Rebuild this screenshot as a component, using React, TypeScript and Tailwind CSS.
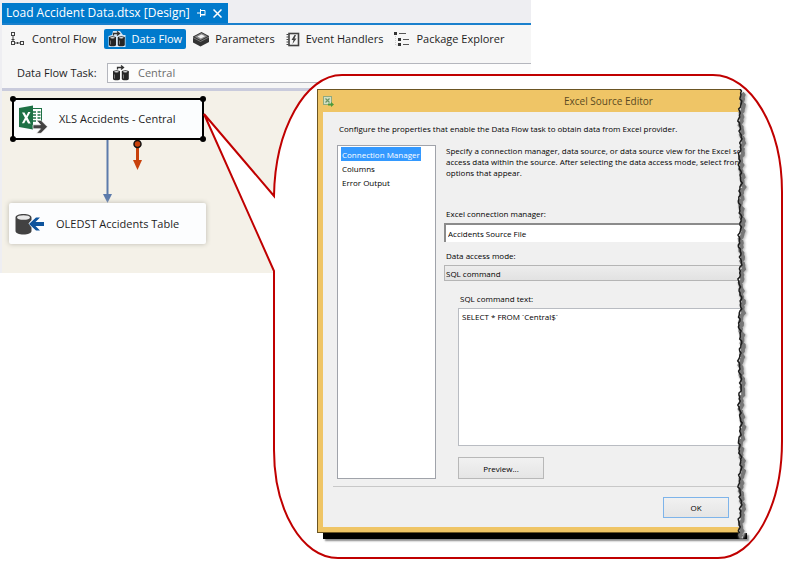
// SSIS designer with a callout that shows the Excel Source Editor dialog
import React, { useState } from "react";

const TABS = ["Control Flow", "Data Flow", "Parameters", "Event Handlers", "Package Explorer"] as const;
const PAGES = ["Connection Manager", "Columns", "Error Output"];

const ControlFlowIcon = () => (
  <svg width="16" height="16" viewBox="0 0 16 16" fill="none" stroke="#424242">
    <rect x="1.500" y="1.500" width="3" height="3" />
    <rect x="1.500" y="10.500" width="3" height="3" />
    <rect x="10.500" y="10.500" width="3" height="3" />
    <path d="M3 5v5M1.500 8.500h3M5 12h5M7.500 11v2" />
  </svg>
);

const DataFlowIcon = ({ light = false }: { light?: boolean }) => (
  <svg width="18" height="16" viewBox="0 0 18 16">
    {light && <path d="M5 0h7l3 4h2.500v12H.5V5L4 4z" fill="#d9e8f5" />}
    <path d="M5.500 4.500V2.500H11M9 .5l2.500 2L9 4.500" fill="none" stroke="#333" strokeWidth="1.300" />
    <path d="M1 6.500h7V14c0 .8-1.500 1.300-3.500 1.300S1 14.800 1 14zM9.800 6.500h7V14c0 .8-1.500 1.300-3.500 1.300s-3.500-.5-3.500-1.300z" fill="#262626" />
    <ellipse cx="4.500" cy="6.800" rx="3.500" ry="1.500" fill="#262626" />
    <ellipse cx="13.300" cy="6.800" rx="3.500" ry="1.500" fill="#262626" />
    <ellipse cx="4.500" cy="6.800" rx="2.300" ry=".8" fill="#ddd" />
    <ellipse cx="13.300" cy="6.800" rx="2.300" ry=".8" fill="#ddd" />
    <path d="M2.500 9.500v4M11.500 9.500v4" stroke="#777" />
  </svg>
);

const ParametersIcon = () => (
  <svg width="16" height="16" viewBox="0 0 16 16">
    <path d="M0 5.500L8.500 1 16 5v6l-8.500 4.500L0 11.500z" fill="#333" />
    <path d="M1.500 5.800L8.500 2 14.500 5.200 7.500 9z" fill="#8a8a8a" />
    <path d="M4.500 5.500L8.500 3.500l3.500 1.800L7.800 7.500z" fill="#eee" />
    <path d="M0 6.500l7.500 4L16 6" fill="none" stroke="#aaa" strokeWidth=".6" />
  </svg>
);

const EventHandlersIcon = () => (
  <svg width="14" height="15" viewBox="0 0 14 15">
    <rect x="3" y="1.500" width="9.500" height="12" fill="#f6f6f6" stroke="#424242" strokeWidth="1.600" />
    <path d="M.5 2.500h2M.5 5h2M.5 7.500h2M.5 10h2M.5 12.500h2" stroke="#424242" />
    <path d="M8.500 3L5.500 8h2L6.500 12 10.500 6.500h-2L10 3z" fill="#424242" />
  </svg>
);

const PackageExplorerIcon = () => (
  <svg width="16" height="16" viewBox="0 0 16 16">
    <path d="M0 1h3v3H0zM4 7h3v3H4zM4 12h3v3H4z" fill="#333" />
    <path d="M5 2.500h7M9 8.500h6M9 13.500h6" stroke="#555" />
    <path d="M1.500 5v9H4" fill="none" stroke="#ccc" strokeDasharray="1 1" />
  </svg>
);

const TAB_ICONS = [ControlFlowIcon, () => <DataFlowIcon light />, ParametersIcon, EventHandlersIcon, PackageExplorerIcon];

const ExcelSourceIcon = () => (
  <svg width="30" height="30" viewBox="0 0 30 30" className="shrink-0">
    <rect x="12.500" y="4.500" width="11" height="17" fill="#fff" stroke="#1e7145" />
    <path d="M15 8h3M19.500 8h3M15 11h3M19.500 11h3M15 14h3M19.500 14h3M15 17h3M19.500 17h3" stroke="#1e7145" strokeWidth="1.500" />
    <path d="M1 4l14-2.500v24L1 23z" fill="#1e7145" />
    <path d="M4 8.500h2.500l1.800 3.300L10.200 8h2.300l-3 5.500 3.200 6h-2.600l-2-3.700-1.900 3.400H3.900l3-5.400z" fill="#fff" />
    <path d="M15 20.800h7.500l-4-4.500h4.500l6.500 6.500-6.500 6.500h-4.500l4-4.500H15z" fill="#424242" stroke="#fff" strokeWidth=".7" />
  </svg>
);

const DestinationIcon = () => (
  <svg width="30" height="22" viewBox="0 0 30 22" className="shrink-0">
    <path d="M.5 4.500C.5 2.500 4 1 8.500 1s8 1.500 8 3.500V7l-3 3.500 3 4V18c0 2-3.500 3.500-8 3.500S.5 20 .5 18z" fill="#424242" />
    <ellipse cx="8.500" cy="4.500" rx="6.500" ry="2.300" fill="#e9e9e9" />
    <path d="M14 11l7-6.500h4l-4.500 4.500H29v4h-8.500l4.500 4.500h-4z" fill="#0e539c" />
  </svg>
);

const EditorIcon = () => (
  <svg width="11" height="11" viewBox="0 0 11 11">
    <rect x=".5" y=".5" width="8" height="8" fill="#d3e0c4" stroke="#8fa97f" />
    <path d="M2.500 2.500l4 4M6.500 2.500l-4 4" stroke="#6b9466" strokeWidth="1.200" />
    <path d="M5 7.500h3V6l3 2.500L8 11V9.500H5z" fill="#4c9a3c" />
  </svg>
);

// Points of the ragged line along the dialog's cut edge
const tear = Array.from({ length: 223 }, (_, i) => {
  const y = i * 2;
  const x = 5 + Math.sin(i * 0.31) * 1 + Math.sin(i * 1.1) * 0.8 + Math.sin(i * 2.3) * 0.6;
  return `${x.toFixed(1)} ${y}`;
});
const tearLine = `M${tear.join("L")}`;

const TornEdge = () => (
  <svg width="14" height="450" viewBox="0 0 14 450" className="absolute top-0 -right-2" aria-hidden="true">
    <path d={`${tearLine}L8 450V0z`} fill="#fff" />
    <path d={tearLine} transform="translate(3 5)" fill="none" stroke="#bbb" strokeWidth="5" className="blur-[1px]" />
    <path d={tearLine} transform="translate(2 4)" fill="none" stroke="#777" strokeWidth="4" />
    <path d={tearLine} fill="none" stroke="#1c1c1c" strokeWidth="1.500" />
  </svg>
);

const Callout = () => (
  <svg width="796" height="568" viewBox="0 0 796 568" className="absolute top-0 left-0" aria-hidden="true">
    <path
      d="M204 114L274 196C275 130 305 75 342 75H713C751 75 782 127 782 192V441C782 506 754 558 718 558H338C302 558 274 510 274 450V271Z"
      fill="#fff"
      stroke="#c00000"
      strokeWidth="2"
    />
  </svg>
);

function ExcelSourceEditor() {
  const [page, setPage] = useState(PAGES[0]);

  return (
    <div
      role="dialog"
      aria-labelledby="editor-title"
      className="absolute top-[89px] left-[317px] w-[424px] font-['Open_Sans',sans-serif] text-[8px] leading-[11px] text-black"
    >
      <div className="absolute -bottom-1.5 left-1.5 h-1.5 w-full bg-black shadow-[2px_2px_2px_#888]" />
      <div className="relative overflow-hidden border border-r-0 border-[#6b5523] bg-[#efc566] pb-[5px] pl-[5px]">
        <header className="flex h-[22px] items-center">
          <EditorIcon />
          <h2 id="editor-title" className="ml-[230px] text-[10px] whitespace-nowrap text-[#5a4a22]">
            Excel Source Editor
          </h2>
        </header>
        <div className="bg-[#f0f0f0] pt-[11px] pb-[9px]">
          <p className="pl-4 whitespace-nowrap">
            Configure the properties that enable the Data Flow task to obtain data from Excel provider.
          </p>
          <div className="mt-[11px] flex gap-2 pl-3.5">
            <ul className="h-[334px] w-[99px] shrink-0 border border-[#a0a3aa] bg-white pt-px pl-[3px]">
              {PAGES.map((name) => (
                <li key={name}>
                  <button
                    type="button"
                    onClick={() => setPage(name)}
                    className={`block h-3.5 px-px whitespace-nowrap ${name === page ? "bg-[#3399ff] text-white" : ""}`}
                  >
                    {name}
                  </button>
                </li>
              ))}
            </ul>
            <div className="min-w-0 flex-1">
              <p className="pl-0.5 whitespace-nowrap">
                Specify a connection manager, data source, or data source view for the Excel so
                <br />
                access data within the source. After selecting the data access mode, select from
                <br />
                options that appear.
              </p>
              <label htmlFor="connection" className="mt-[30px] block pl-0.5">
                Excel connection manager:
              </label>
              <select
                id="connection"
                className="mt-1 block h-[19px] w-full appearance-none border-t-2 border-l-2 border-[#8b8b8b] bg-white pl-0.5"
              >
                <option>Accidents Source File</option>
              </select>
              <label htmlFor="mode" className="mt-2 block pl-0.5">
                Data access mode:
              </label>
              <select
                id="mode"
                className="mt-1 block h-4 w-full appearance-none border border-[#b5b5b5] bg-linear-to-b from-[#ededed] to-[#e2e2e2] pl-px"
              >
                <option>SQL command</option>
              </select>
              <div className="mt-3 pl-3.5">
                <label htmlFor="sql" className="block pl-0.5">
                  SQL command text:
                </label>
                <textarea
                  id="sql"
                  spellCheck={false}
                  defaultValue="SELECT * FROM `Central$`"
                  className="mt-1 block h-[138px] w-full resize-none border border-[#b9bcc2] bg-white px-[3px] py-0.5"
                />
                <button
                  type="button"
                  className="mt-[11px] block h-[22px] w-[86px] border border-[#b8b8b8] bg-linear-to-b from-[#f1f1f1] to-[#e5e5e5]"
                >
                  Preview...
                </button>
              </div>
            </div>
          </div>
          <div className="mt-[7px] ml-2.5 border-t border-[#c8c8c8] pt-2.5">
            <button
              type="button"
              className="mr-3 ml-auto block h-[21px] w-[66px] border border-[#7eb4ea] bg-linear-to-b from-[#f1f1f1] to-[#e5e5e5]"
            >
              OK
            </button>
          </div>
        </div>
      </div>
      <TornEdge />
    </div>
  );
}

function DesignCanvas() {
  return (
    <div className="relative h-[182px] bg-[#f4f1e8]">
      <svg width="200" height="182" viewBox="0 0 200 182" className="absolute top-0 left-0" aria-hidden="true">
        <path d="M105.500 48v56" stroke="#5c7bab" strokeWidth="2" />
        <path d="M101 103h9l-4.500 9z" fill="#5c7bab" />
        <path d="M135.500 52v20" stroke="#c8420c" strokeWidth="3" />
        <path d="M131 69h9l-4.500 10z" fill="#c8420c" />
        <circle cx="135.500" cy="53" r="3.500" fill="#c8420c" stroke="#111" strokeWidth="1.500" />
      </svg>
      <div className="absolute top-[7px] left-2.5 flex h-[42px] w-[192px] items-center gap-[11px] border-2 border-black bg-[#fbfdfe] pl-1">
        <ExcelSourceIcon />
        <span className="whitespace-nowrap">XLS Accidents - Central</span>
        <i className="absolute -top-1 -left-1 size-1.5 rounded-full bg-black" />
        <i className="absolute -top-1 -right-1 size-1.5 rounded-full bg-black" />
        <i className="absolute -bottom-1 -left-1 size-1.5 rounded-full bg-black" />
        <i className="absolute -right-1 -bottom-1 size-1.5 rounded-full bg-black" />
      </div>
      <div className="absolute top-28 left-[7px] flex h-[41px] w-[197px] items-center gap-[11px] rounded-xs bg-[#fcfdfe] pl-1.5 shadow-[0_0_5px_#bbb8af]">
        <DestinationIcon />
        <span className="whitespace-nowrap">OLEDST Accidents Table</span>
      </div>
    </div>
  );
}

export default function App() {
  const [activeTab, setActiveTab] = useState<string>("Data Flow");

  return (
    <div className="relative min-h-screen overflow-hidden bg-white">
      <section className="w-2/3 bg-[#eeeef2] pl-0.5 font-['Open_Sans',sans-serif] text-[11px] leading-4 text-[#1e1e1e]">
        <div className="flex h-[25px] items-end border-b-2 border-[#1a80cd] pt-[3px]">
          <div className="flex h-full items-center gap-[7px] bg-[#007acc] pr-1.5 pl-1 text-white">
            <span className="text-xs whitespace-nowrap">Load Accident Data.dtsx [Design]</span>
            <button type="button" aria-label="Pin">
              <svg width="9" height="8" viewBox="0 0 9 8" fill="none" stroke="#fff">
                <path d="M0 4h3M3.500 0v8M4 1.500h4v4H4M4 6h4.500" />
              </svg>
            </button>
            <button type="button" aria-label="Close">
              <svg width="9" height="9" viewBox="0 0 9 9" stroke="#fff" strokeWidth="1.500">
                <path d="M.5.5l8 8M8.500.5l-8 8" />
              </svg>
            </button>
          </div>
        </div>
        <nav className="flex h-[38px] items-start gap-[3px] bg-[#f6f6f6] pt-1 pl-1">
          {TABS.map((tab, i) => {
            const Icon = TAB_ICONS[i];
            return (
              <button
                key={tab}
                type="button"
                onClick={() => setActiveTab(tab)}
                className={`flex h-5 items-center gap-1.5 px-1 whitespace-nowrap ${
                  tab === activeTab ? "rounded-xs bg-[#007acc] text-white" : ""
                }`}
              >
                <Icon />
                {tab}
              </button>
            );
          })}
        </nav>
        <div className="flex h-[25px] items-start bg-[#f6f6f6]">
          <label htmlFor="task" className="w-[105px] shrink-0 pt-0.5 pl-[15px]">
            Data Flow Task:
          </label>
          <div className="flex h-5 flex-1 items-center gap-1 border border-r-0 border-[#b4b6bd] bg-[#fcfcfc] pl-1 text-[#6d6d6d]">
            <DataFlowIcon />
            <select id="task" className="flex-1 appearance-none pl-1">
              <option>Central</option>
            </select>
          </div>
        </div>
        <div className="h-[3px] bg-[#c9cbdc]" />
        <DesignCanvas />
      </section>
      <Callout />
      <ExcelSourceEditor />
    </div>
  );
}
